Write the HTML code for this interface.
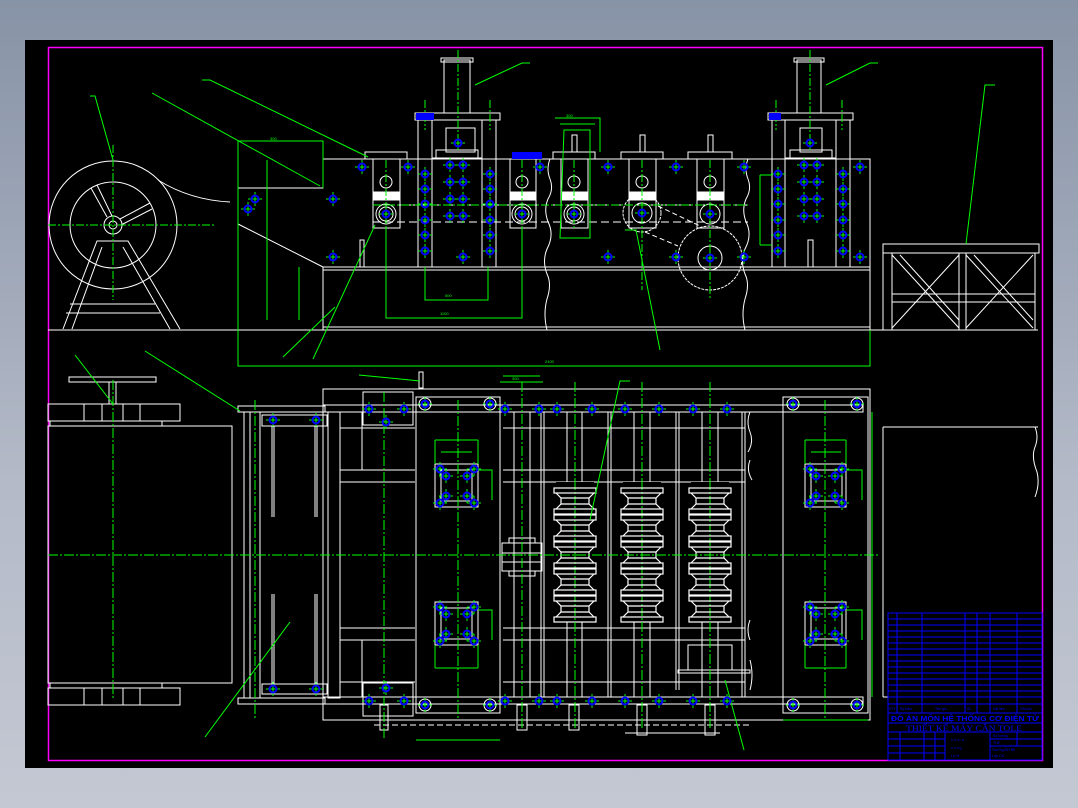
<!DOCTYPE html>
<html><head><meta charset="utf-8"><style>
html,body{margin:0;padding:0;width:1078px;height:808px;overflow:hidden;background:linear-gradient(#8793a6,#b4bac8 60%,#c4c8d3);}
svg{position:absolute;left:0;top:0}
</style></head><body>
<svg width="1078" height="808" viewBox="0 0 1078 808" font-family="Liberation Sans, sans-serif">
<defs>
<g id="b"><line x1="-7" y1="0" x2="7" y2="0" stroke="#0f0" stroke-width="1"/><line x1="0" y1="-7" x2="0" y2="7" stroke="#0f0" stroke-width="1"/><circle r="3.5" fill="none" stroke="#00f" stroke-width="2"/></g>
<g id="r" fill="none" stroke="#fff" stroke-width="1.2"><rect x="-21" y="0" width="42" height="5"/><path d="M-19 5 L-14 10 L-14 16 L-19 21 M19 5 L14 10 L14 16 L19 21"/><rect x="-21" y="21" width="42" height="5"/><line x1="-14" y1="10" x2="14" y2="10"/><line x1="-14" y1="16" x2="14" y2="16"/></g>
</defs>
<rect x="25" y="40" width="1028" height="728" fill="#000"/>
<rect x="48.5" y="47.5" width="994" height="713" fill="none" stroke="#f0f" stroke-width="1.5"/>

<g fill="none" stroke="#fff" stroke-width="1">
<line x1="48" y1="330" x2="1038" y2="330"/>
<circle cx="113" cy="225" r="64"/>
<circle cx="113" cy="225" r="43"/>
<circle cx="113" cy="225" r="9"/><circle cx="113" cy="225" r="4"/>
<path d="M107 217 L91 188 M97 185 L112 216 M120 219 L150 203 M152 209 L121 225"/>
<path d="M63 329 L97 241 L128 241 L180 329 M72 329 L102 247 M123 247 L170 329"/>
<line x1="70" y1="304" x2="155" y2="304"/><line x1="66" y1="313" x2="160" y2="313"/>
<path d="M158 180 Q190 200 230 202"/>
<path d="M238 188 L323 188 L323 159 L870 159 L870 330"/>
<path d="M238 224 L323 267"/>
<line x1="323" y1="267" x2="870" y2="267"/><line x1="323" y1="270" x2="870" y2="270"/>
<line x1="323" y1="267" x2="323" y2="330"/><line x1="323" y1="327" x2="870" y2="327"/>
<rect x="360" y="240" width="4" height="27"/>
<rect x="415" y="113" width="85" height="7"/>
<rect x="444" y="60" width="26" height="53"/><rect x="441" y="58" width="32" height="4"/>
<rect x="418" y="120" width="14" height="147"/><rect x="482" y="120" width="14" height="147"/>
<rect x="432" y="158" width="50" height="109"/>
<rect x="446" y="128" width="29" height="24"/><rect x="436" y="150" width="42" height="8"/>
<rect x="373" y="159" width="27" height="69"/><circle cx="386" cy="182" r="6"/><circle cx="386" cy="214" r="10"/><circle cx="386" cy="214" r="7"/><rect x="374" y="192" width="25" height="8" fill="#fff"/>
<rect x="510" y="159" width="26" height="69"/><circle cx="522" cy="182" r="6"/><circle cx="522" cy="214" r="10"/><circle cx="522" cy="214" r="7"/><rect x="511" y="192" width="24" height="8" fill="#fff"/>
<rect x="561" y="159" width="27" height="69"/><circle cx="574" cy="182" r="6"/><circle cx="574" cy="214" r="10"/><circle cx="574" cy="214" r="7"/><rect x="562" y="192" width="25" height="8" fill="#fff"/>
<rect x="629" y="159" width="27" height="69"/><circle cx="642" cy="182" r="6"/><rect x="630" y="192" width="25" height="8" fill="#fff"/>
<rect x="697" y="159" width="27" height="69"/><circle cx="710" cy="182" r="6"/><circle cx="710" cy="214" r="10"/><rect x="698" y="192" width="25" height="8" fill="#fff"/>
<rect x="553" y="152" width="42" height="7"/><rect x="621" y="152" width="42" height="7"/><rect x="688" y="152" width="44" height="7"/><rect x="365" y="152" width="42" height="7"/>
<rect x="572" y="135" width="5" height="17"/><rect x="640" y="135" width="5" height="17"/><rect x="708" y="135" width="5" height="17"/>
<path d="M373 205 H748 M373 222 H748" stroke-dasharray="8 4"/>
<path d="M550 159 q-4 10 0 20 q4 10 -2 20 q-5 12 1 25 q5 12 -2 25 q-5 12 0 25 q5 10 0 25 q-4 15 0 31"/>
<path d="M748 159 q-4 10 0 20 q4 10 -2 20 q-5 12 1 25 q5 12 -2 25 q-5 12 0 25 q5 10 0 25 q-4 15 0 31"/>
<circle cx="642" cy="213" r="19" stroke-dasharray="3 1"/><circle cx="642" cy="213" r="10"/>
<circle cx="710" cy="258" r="32" stroke-dasharray="3 1"/><circle cx="710" cy="258" r="12"/>
<path d="M658 206 L700 226 M645 232 L678 246" stroke-dasharray="5 3"/>
<rect x="768" y="113" width="85" height="7"/>
<rect x="797" y="60" width="24" height="53"/><rect x="794" y="58" width="30" height="4"/>
<rect x="772" y="120" width="13" height="147"/><rect x="836" y="120" width="14" height="147"/>
<rect x="785" y="158" width="51" height="109"/><rect x="850" y="159" width="20" height="108"/>
<rect x="800" y="128" width="22" height="24"/><rect x="790" y="150" width="42" height="8"/>
<rect x="808" y="240" width="5" height="27"/>
<rect x="883" y="244" width="156" height="9"/>
<path d="M883 253 V330 M892 253 V330 M959 253 V330 M966 253 V330 M1035 253 V330 M892 294 H1035 M892 302 H1035"/>
<path d="M892 255 L959 328 M959 255 L892 328 M900 255 L959 320 M966 255 L1033 328 M1033 255 L966 328 M974 255 L1033 320"/>

<rect x="69" y="377" width="87" height="5"/><rect x="109" y="382" width="7" height="22"/>
<rect x="48" y="404" width="132" height="17"/><path d="M84 404 V421 M140 404 V421 M102 404 V421 M123 404 V421"/><rect x="50" y="421" width="112" height="5"/>
<rect x="50" y="683" width="112" height="5"/><rect x="48" y="688" width="132" height="17"/><path d="M84 688 V705 M140 688 V705 M102 688 V705 M123 688 V705"/>
<rect x="48" y="426" width="184" height="257"/>
<rect x="238" y="406" width="87" height="6"/><rect x="238" y="698" width="87" height="6"/>
<rect x="244" y="412" width="16" height="286"/><line x1="250" y1="412" x2="250" y2="698"/>
<rect x="262" y="415" width="65" height="11"/><rect x="262" y="684" width="65" height="10"/>
<path d="M272 426 V517 M274 426 V517 M315 426 V517 M317 426 V517 M272 594 V684 M274 594 V684 M315 594 V684 M317 594 V684"/>
<rect x="328" y="412" width="12" height="286"/>
<rect x="323" y="389" width="547" height="331"/>
<rect x="323" y="405" width="540" height="7"/><rect x="323" y="697" width="540" height="7"/>
<path d="M340 470 H415 M340 482 H415 M340 628 H415 M340 640 H415 M340 428 H415 M340 682 H415 M362 412 V470 M362 640 V697"/>
<rect x="363" y="392" width="50" height="33"/><rect x="363" y="683" width="50" height="33"/>
<rect x="416" y="397" width="84" height="316"/>
<rect x="435" y="464" width="43" height="43"/><rect x="441" y="470" width="31" height="31"/>
<rect x="435" y="602" width="43" height="43"/><rect x="441" y="608" width="31" height="31"/>
<path d="M514 412 V697 M530 412 V697 M567 412 V697 M582 412 V697 M634 412 V697 M650 412 V697 M702 412 V697 M718 412 V697"/>
<path d="M503 428 H745 M503 470 H745 M503 482 H745 M503 628 H745 M503 640 H745 M503 682 H745"/>
<path d="M541 412 V697 M544 412 V697 M608 412 V697 M611 412 V697 M676 412 V690 M679 412 V690 M742 412 V697 M745 412 V697"/>
<rect x="502" y="543" width="40" height="28"/><rect x="509" y="538" width="26" height="5"/><rect x="509" y="571" width="26" height="5"/><line x1="502" y1="553" x2="542" y2="553"/><line x1="502" y1="562" x2="542" y2="562"/>
<rect x="688" y="645" width="44" height="25"/><rect x="678" y="670" width="72" height="3"/>
<path d="M750 412 q-4 10 0 20 q4 10 -2 20 M750 460 q-4 10 2 20 M750 620 q-4 10 0 20 M750 660 q4 15 0 30"/>
<rect x="783" y="397" width="85" height="316"/>
<rect x="805" y="464" width="41" height="43"/><rect x="811" y="470" width="31" height="31"/>
<rect x="805" y="602" width="41" height="43"/><rect x="811" y="608" width="31" height="31"/>
<circle cx="425" cy="404" r="6"/><circle cx="490" cy="404" r="6"/><circle cx="425" cy="705" r="6"/><circle cx="490" cy="705" r="6"/>
<circle cx="793" cy="404" r="6"/><circle cx="857" cy="404" r="6"/><circle cx="793" cy="705" r="6"/><circle cx="857" cy="705" r="6"/>
<path d="M374 725 H500 M500 725 H750" stroke-dasharray="6 3"/>
<rect x="380" y="705" width="8" height="25"/><rect x="517" y="705" width="10" height="25"/><rect x="569" y="705" width="10" height="25"/><rect x="637" y="705" width="10" height="30"/><rect x="705" y="705" width="10" height="30"/>
<line x1="625" y1="733" x2="720" y2="733"/>
<path d="M883 427 H1038 M883 427 V697 M883 697 H888 M1035 427 q4 10 0 20 q-4 10 2 25 q3 12 -2 25"/>
<rect x="419" y="372" width="4" height="16"/>
</g>
<g>
<rect x="556" y="482" width="38" height="140" fill="#000"/><rect x="623" y="482" width="38" height="140" fill="#000"/><rect x="691" y="482" width="38" height="140" fill="#000"/>
<line x1="575" y1="482" x2="575" y2="622" stroke="#0f0" stroke-dasharray="8 2 2 2"/><line x1="642" y1="482" x2="642" y2="622" stroke="#0f0" stroke-dasharray="8 2 2 2"/><line x1="710" y1="482" x2="710" y2="622" stroke="#0f0" stroke-dasharray="8 2 2 2"/>
<use href="#r" x="575" y="488"/><use href="#r" x="575" y="515"/><use href="#r" x="575" y="542"/><use href="#r" x="575" y="569"/><use href="#r" x="575" y="596"/>
<use href="#r" x="642" y="488"/><use href="#r" x="642" y="515"/><use href="#r" x="642" y="542"/><use href="#r" x="642" y="569"/><use href="#r" x="642" y="596"/>
<use href="#r" x="710" y="488"/><use href="#r" x="710" y="515"/><use href="#r" x="710" y="542"/><use href="#r" x="710" y="569"/><use href="#r" x="710" y="596"/>
</g>

<g fill="none" stroke="#0f0" stroke-width="1">
<path d="M238 141 H323 V188 M238 141 V366 H870 V330"/>
<path d="M267 160 V320 M299 267 V320 M386 228 V318 H522 V228 M425 267 V300 H488 V267"/>
<path d="M113 145 V300" stroke-dasharray="8 2 2 2"/>
<path d="M48 225 H215" stroke-dasharray="8 2 2 2"/>
<path d="M90 96 H95 L113 160 M152 93 L320 186 M202 80 H210 L368 157 M475 85 L522 63 H530 M826 85 L870 63 H878 M966 244 L985 85 H995"/>
<path d="M283 357 L335 307 M313 359 L375 225 M660 350 L636 230 H625 M744 750 L725 680"/>
<path d="M75 355 L113 404 M145 351 L240 411 M205 737 L290 622 M590 520 L620 381 H630 M359 375 L420 381"/>
<path d="M555 118 H600 V152 M560 124 H595 M564 130 H590 V238 H560 Z"/>
<path d="M760 175 H772 M760 245 H772 M760 175 V245"/>
<path d="M113 380 V700 M255 400 V720 M384 392 V740 M522 382 V730 M575 382 V482 M575 622 V730 M642 382 V482 M642 622 V730 M710 382 V482 M710 622 V730 M458 400 V720 M825 400 V720" stroke-dasharray="10 2 2 2"/>
<path d="M48 555 H880" stroke-dasharray="10 2 2 2"/>
<path d="M500 382 H543 M503 376 H540 M435 440 H478 M441 452 H472 M435 668 H478 M805 440 H846 M811 452 H841 M805 668 H846 M416 740 H500 M783 720 H868 M478 470 H492 V500 M846 470 H862 V500 M478 610 H492 V640 M846 610 H862 V640 M872 412 V697"/>
<path d="M435 440 V464 M478 440 V464 M435 645 V668 M478 645 V668 M805 440 V464 M846 440 V464 M805 645 V668 M846 645 V668"/>
<path d="M373 205 H748 M386 160 V230 M522 160 V230 M574 160 V230 M642 160 V290 M710 160 V300 M458 50 V150 M810 50 V150 M425 100 V130 M490 100 V130 M776 100 V130 M842 100 V130" stroke-dasharray="8 2 2 2"/>
</g>

<g>
<use href="#b" x="362" y="167"/><use href="#b" x="408" y="167"/><use href="#b" x="255" y="199"/><use href="#b" x="248" y="209"/><use href="#b" x="333" y="199"/><use href="#b" x="333" y="257"/>
<use href="#b" x="425" y="174"/><use href="#b" x="425" y="189"/><use href="#b" x="425" y="204"/><use href="#b" x="425" y="220"/><use href="#b" x="425" y="235"/><use href="#b" x="425" y="251"/>
<use href="#b" x="490" y="174"/><use href="#b" x="490" y="189"/><use href="#b" x="490" y="204"/><use href="#b" x="490" y="220"/><use href="#b" x="490" y="235"/><use href="#b" x="490" y="251"/>
<use href="#b" x="450" y="165"/><use href="#b" x="463" y="165"/><use href="#b" x="450" y="182"/><use href="#b" x="463" y="182"/><use href="#b" x="450" y="199"/><use href="#b" x="463" y="199"/><use href="#b" x="450" y="216"/><use href="#b" x="463" y="216"/><use href="#b" x="463" y="257"/>
<use href="#b" x="458" y="143"/><use href="#b" x="810" y="143"/>
<use href="#b" x="778" y="174"/><use href="#b" x="778" y="189"/><use href="#b" x="778" y="204"/><use href="#b" x="778" y="220"/><use href="#b" x="778" y="235"/><use href="#b" x="778" y="251"/>
<use href="#b" x="843" y="174"/><use href="#b" x="843" y="189"/><use href="#b" x="843" y="204"/><use href="#b" x="843" y="220"/><use href="#b" x="843" y="235"/><use href="#b" x="843" y="251"/>
<use href="#b" x="804" y="165"/><use href="#b" x="817" y="165"/><use href="#b" x="804" y="182"/><use href="#b" x="817" y="182"/><use href="#b" x="804" y="199"/><use href="#b" x="817" y="199"/><use href="#b" x="804" y="216"/><use href="#b" x="817" y="216"/>
<use href="#b" x="860" y="167"/><use href="#b" x="860" y="257"/><use href="#b" x="608" y="167"/><use href="#b" x="676" y="167"/><use href="#b" x="744" y="167"/><use href="#b" x="608" y="257"/><use href="#b" x="676" y="257"/><use href="#b" x="744" y="257"/><use href="#b" x="540" y="167"/>
<use href="#b" x="386" y="214"/><use href="#b" x="522" y="214"/><use href="#b" x="574" y="214"/><use href="#b" x="642" y="213"/><use href="#b" x="710" y="214"/><use href="#b" x="710" y="258"/>
<use href="#b" x="273" y="420"/><use href="#b" x="316" y="420"/><use href="#b" x="273" y="689"/><use href="#b" x="316" y="689"/>
<use href="#b" x="369" y="409"/><use href="#b" x="404" y="409"/><use href="#b" x="386" y="422"/><use href="#b" x="386" y="688"/><use href="#b" x="369" y="701"/><use href="#b" x="404" y="701"/>
<use href="#b" x="440" y="469"/><use href="#b" x="474" y="469"/><use href="#b" x="446" y="476"/><use href="#b" x="467" y="476"/><use href="#b" x="446" y="496"/><use href="#b" x="467" y="496"/><use href="#b" x="440" y="503"/><use href="#b" x="474" y="503"/>
<use href="#b" x="440" y="607"/><use href="#b" x="474" y="607"/><use href="#b" x="446" y="614"/><use href="#b" x="467" y="614"/><use href="#b" x="446" y="634"/><use href="#b" x="467" y="634"/><use href="#b" x="440" y="641"/><use href="#b" x="474" y="641"/>
<use href="#b" x="810" y="469"/><use href="#b" x="842" y="469"/><use href="#b" x="816" y="476"/><use href="#b" x="835" y="476"/><use href="#b" x="816" y="496"/><use href="#b" x="835" y="496"/><use href="#b" x="810" y="503"/><use href="#b" x="842" y="503"/>
<use href="#b" x="810" y="607"/><use href="#b" x="842" y="607"/><use href="#b" x="816" y="614"/><use href="#b" x="835" y="614"/><use href="#b" x="816" y="634"/><use href="#b" x="835" y="634"/><use href="#b" x="810" y="641"/><use href="#b" x="842" y="641"/>
<use href="#b" x="505" y="409"/><use href="#b" x="539" y="409"/><use href="#b" x="557" y="409"/><use href="#b" x="592" y="409"/><use href="#b" x="625" y="409"/><use href="#b" x="659" y="409"/><use href="#b" x="693" y="409"/><use href="#b" x="727" y="409"/>
<use href="#b" x="505" y="701"/><use href="#b" x="539" y="701"/><use href="#b" x="557" y="701"/><use href="#b" x="592" y="701"/><use href="#b" x="625" y="701"/><use href="#b" x="659" y="701"/><use href="#b" x="693" y="701"/><use href="#b" x="727" y="701"/>
<use href="#b" x="425" y="404"/><use href="#b" x="490" y="404"/><use href="#b" x="425" y="705"/><use href="#b" x="490" y="705"/><use href="#b" x="793" y="404"/><use href="#b" x="857" y="404"/><use href="#b" x="793" y="705"/><use href="#b" x="857" y="705"/>
</g>
<g fill="#00f"><rect x="416" y="113" width="18" height="7"/><rect x="512" y="152" width="30" height="7"/><rect x="769" y="113" width="12" height="7"/></g>

<g fill="none" stroke="#00f" stroke-width="1">
<rect x="888" y="613" width="154" height="147"/>
<path d="M888 619 H1042 M888 625 H1042 M888 631 H1042 M888 637 H1042 M888 643 H1042 M888 649 H1042 M888 655 H1042 M888 661 H1042 M888 667 H1042 M888 673 H1042 M888 679 H1042 M888 685 H1042 M888 691 H1042 M888 697 H1042 M888 704 H1042 M888 713 H1042 M888 723 H1042 M888 732 H1042"/>
<path d="M897 613 V713 M922 613 V713 M965 613 V713 M977 613 V713 M990 613 V713 M1017 613 V713"/>
<path d="M888 739 H945 M888 746 H945 M888 753 H945 M900 732 V760 M924 732 V760 M935 732 V760 M945 732 V760 M990 732 V760 M990 739 H1042 M990 746 H1042 M1017 732 V746"/>
</g>
<g fill="#00f" font-size="3.5">
<text x="889" y="710">STT</text><text x="900" y="710">Ký hiệu</text><text x="935" y="710">Tên gọi</text><text x="967" y="710">SL</text><text x="993" y="710">Vật liệu</text><text x="1020" y="710">Ghi chú</text>
<text x="891" y="721" font-size="7" font-weight="bold" textLength="148" lengthAdjust="spacingAndGlyphs">ĐỒ ÁN MÔN HỆ THỐNG CƠ ĐIỆN TỬ</text>
<text x="906" y="731" font-size="8" font-family="Liberation Serif, serif" textLength="116" lengthAdjust="spacingAndGlyphs">THIẾT KẾ MÁY CẮN TOLE</text>
<text x="951" y="741">s ố l ư ợ</text><text x="951" y="749">c o n g</text><text x="951" y="757">t ỷ l ệ</text>
<text x="993" y="737">Số lượng</text><text x="993" y="744">Tỉ lệ</text><text x="992" y="751">Trường ĐH BK</text><text x="992" y="757">Lớp CK</text>
</g>
<g fill="#0f0" font-size="4">
<text x="270" y="140">300</text><text x="445" y="297">500</text><text x="440" y="315">1100</text><text x="545" y="363">2400</text><text x="566" y="117">300</text><text x="512" y="380">300</text>
</g>
</svg>
</body></html>
